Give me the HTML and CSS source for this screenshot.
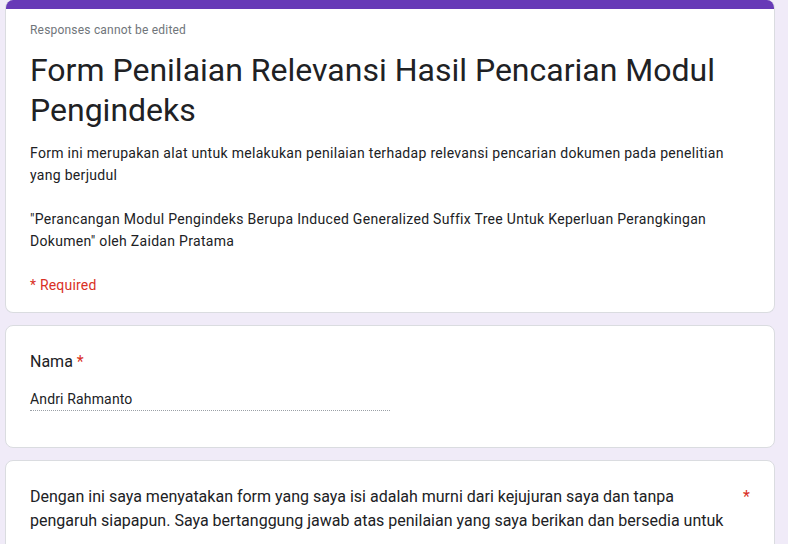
FILE: index.html
```html
<!DOCTYPE html>
<html lang="id">
<head>
<meta charset="utf-8">
<title>Form Penilaian Relevansi</title>
<link rel="stylesheet" href="styles.css">
</head>
<body>
<main class="page">
  <section class="card header-card">
    <div class="accent"></div>
    <div class="header-body">
      <div class="note">Responses cannot be edited</div>
      <h1 class="title">Form Penilaian Relevansi Hasil Pencarian Modul Pengindeks</h1>
      <div class="desc">
        <p>Form ini merupakan alat untuk melakukan penilaian terhadap relevansi pencarian dokumen pada penelitian yang berjudul</p>
        <p class="blank">&nbsp;</p>
        <p>"Perancangan Modul Pengindeks Berupa Induced Generalized Suffix Tree Untuk Keperluan Perangkingan Dokumen" oleh Zaidan Pratama</p>
      </div>
      <div class="required-note">* Required</div>
    </div>
  </section>

  <section class="card question name-card">
    <div class="q-title">Nama <span class="star">*</span></div>
    <div class="answer">Andri Rahmanto</div>
  </section>

  <section class="card question">
    <div class="q-row">
      <div class="q-text">Dengan ini saya menyatakan form yang saya isi adalah murni dari kejujuran saya dan tanpa pengaruh siapapun. Saya bertanggung jawab atas penilaian yang saya berikan dan bersedia untuk</div>
      <span class="star q-star">*</span>
    </div>
  </section>
</main>
</body>
</html>
```
FILE: styles.css
```css
html, body {
  margin: 0;
  padding: 0;
  background: #f0ebf8;
  height: 100%;
  overflow: hidden;
}
body {
  font-family: Roboto, "Liberation Sans", Arial, sans-serif;
  color: #202124;
}
.page {
  width: 770px;
  margin-left: 5px;
  display: flex;
  flex-direction: column;
  gap: 12px;
}
.card {
  background: #fff;
  border: 1px solid #dadce0;
  border-radius: 8px;
  box-sizing: border-box;
}
.header-card {
  border-top: none;
  overflow: hidden;
}
.accent {
  height: 9px;
  background: #673ab7;
  margin: 0 -1px;
}
.header-body {
  padding: 13px 24px 16px 24px;
}
.note {
  font-size: 12px;
  line-height: 16px;
  color: #70757a;
  letter-spacing: 0.2px;
}
.title {
  margin: 12px 0 0 0;
  font-weight: 400;
  font-size: 32px;
  line-height: 40px;
  color: #202124;
}
.desc {
  margin-top: 12px;
  font-size: 14px;
  line-height: 22px;
  letter-spacing: 0.3px;
  color: #202124;
}
.desc p {
  margin: 0;
}
.required-note {
  margin-top: 22px;
  font-size: 14px;
  line-height: 22px;
  letter-spacing: 0.2px;
  color: #d93025;
}
.question {
  padding: 24px;
}
.q-title {
  font-size: 16px;
  line-height: 24px;
  color: #202124;
}
.star {
  color: #d93025;
}
.answer {
  margin-top: 15px;
  width: 360px;
  font-size: 14px;
  line-height: 20px;
  letter-spacing: 0.15px;
  padding-bottom: 1px;
  border-bottom: 1px dotted #9aa0a6;
  color: #202124;
}
.name-card {
  height: 123px;
}
.q-row {
  display: flex;
  gap: 12px;
}
.q-text {
  flex: 1;
  font-size: 16px;
  line-height: 24px;
}
.q-star {
  font-size: 16px;
  line-height: 24px;
}
```
